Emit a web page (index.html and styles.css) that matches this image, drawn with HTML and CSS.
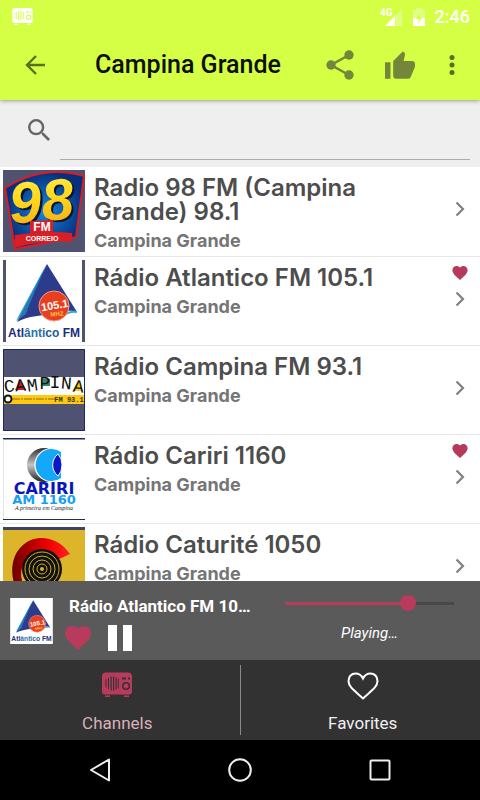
FILE: index.html
```html
<!DOCTYPE html>
<html lang="en">
<head>
<meta charset="utf-8">
<meta name="viewport" content="width=device-width, initial-scale=1">
<title>Campina Grande</title>
<link rel="stylesheet" href="styles.css">
</head>

<body>
<!--shared icons-->
<svg class="defs" aria-hidden="true">
	<symbol id="heart" viewBox="2 3 20 18.4"><path d="M12 21.35l-1.45-1.32C5.4 15.36 2 12.28 2 8.5 2 5.42 4.42 3 7.5 3c1.74 0 3.41.81 4.5 2.09C13.09 3.81 14.76 3 16.5 3 19.58 3 22 5.42 22 8.5c0 3.78-3.4 6.86-8.55 11.54z"/></symbol>
	<symbol id="chevron" viewBox="0 0 10 16"><path d="M1.5 1.5L8 8l-6.500 6.500" fill="none" stroke="currentColor" stroke-width="2.200"/></symbol>
	<symbol id="radio" viewBox="0 0 30 25">
		<path fill-rule="evenodd" d="M4 0h22a4 4 0 0 1 4 4v15a3 3 0 0 1-3 3H3a3 3 0 0 1-3-3V4a4 4 0 0 1 4-4zM20 5v2h4V5zM26 5v2h2V5zM24 9.500a4 4 0 1 0 0 8 4 4 0 0 0 0-8zM3.500 7v8h1V7zM6 5.500v11h1v-11zM8.500 4v14h1.200V4zM11 4v14h1.200V4zM13.500 5v12h1.200V5zM15.800 6v10h1V6z"/>
		<circle cx="24" cy="13.500" r="2.500"/>
		<path d="M3 23h5v1.500H3zM22 23h5v1.500h-5z"/>
	</symbol>
	<symbol id="atlantico" viewBox="0 0 76 82">
		<rect width="76" height="82" fill="#fff"/>
		<path d="M40 5L10 61l12-13z" fill="#25b4d8"/>
		<path d="M41 4l30 48c-8-3-13 0-22 2-12 1-27 2-38 8z" fill="#2d3b8d"/>
		<path d="M41 4L10 61l10-7c4-12 12-30 21-50z" fill="#2a9fcb" opacity=".6"/>
		<path d="M57 56c5-4 9-5 14-4" fill="none" stroke="#25b4d8" stroke-width="2"/>
		<circle cx="48" cy="46" r="15" fill="#e8401f" stroke="#f49b83"/>
		<text x="49" y="49" transform="rotate(-9 49 47)" class="t-freq">105.1</text>
		<text x="51" y="56" transform="rotate(-4 51 55)" class="t-mhz">MHZ</text>
		<text x="38" y="77" class="t-atl"><tspan fill="#1e2d7d">Atl</tspan><tspan fill="#2c73a5">ânti</tspan><tspan fill="#255a93">co</tspan><tspan fill="#1e2d7d"> FM</tspan></text>
	</symbol>
	<linearGradient id="gold" x2="0" y2="1"><stop stop-color="#fff14a"/><stop offset=".5" stop-color="#ffd51c"/><stop offset="1" stop-color="#f3a711"/></linearGradient>
	<radialGradient id="blue"><stop stop-color="#1289e0"/><stop offset="1" stop-color="#082f7c"/></radialGradient>
	<linearGradient id="steel" x2="0" y2="1"><stop stop-color="#333"/><stop offset=".5" stop-color="#c6c6c6"/><stop offset="1" stop-color="#222"/></linearGradient>
	<linearGradient id="red"><stop stop-color="#6d0000"/><stop offset=".6" stop-color="#e00"/><stop offset="1" stop-color="#f22"/></linearGradient>
</svg>

<!--header-->
<header class="header">
	<div class="status">
		<svg class="status-radio" width="21" height="17"><use href="#radio"/></svg>
		<svg width="23" height="19" viewBox="0 0 23 19">
			<path d="M22 2v17H5z" fill="#fff" opacity=".3"/>
			<path d="M15 9v10H5z" fill="#fff"/>
			<text x="0" y="9" class="t-4g">4G</text>
		</svg>
		<svg width="12" height="19" viewBox="0 0 12 19">
			<path d="M0 3h3V1h6v2h3v8H0z" fill="#fff" opacity=".35"/>
			<path d="M0 11h12v8H0z" fill="#fff"/>
			<path d="M7 5l-4 7h3l-1 5 4-7H6z" fill="#d4ff45"/>
		</svg>
		<span class="time">2:46</span>
	</div>
	<div class="appbar">
		<button class="icon-btn back" aria-label="Back">
			<svg width="20" height="20" viewBox="0 0 20 20"><path d="M11 1l-9 9 9 9M2 10h18" fill="none" stroke="currentColor" stroke-width="2.400"/></svg>
		</button>
		<h1 class="title">Campina Grande</h1>
		<button class="icon-btn share" aria-label="Share">
			<svg width="28" height="30" viewBox="0 0 28 30"><path d="M23 5L5 15l18 10" fill="none" stroke="currentColor" stroke-width="2.500"/><g fill="currentColor"><circle cx="23" cy="5" r="4.700"/><circle cx="5" cy="15" r="4.700"/><circle cx="23" cy="25" r="4.700"/></g></svg>
		</button>
		<button class="icon-btn like" aria-label="Like">
			<svg width="30" height="28" viewBox="1 1 22 20"><path fill="currentColor" d="M1 21h4V9H1v12zm22-11c0-1.100-.9-2-2-2h-6.310l.95-4.570.03-.32c0-.41-.17-.79-.44-1.060L14.170 1 7.590 7.590C7.220 7.950 7 8.450 7 9v10c0 1.100.9 2 2 2h9c.83 0 1.540-.5 1.840-1.220l3.020-7.050c.09-.23.14-.47.14-.73v-2z"/></svg>
		</button>
		<button class="icon-btn more" aria-label="More options">
			<svg width="6" height="20" viewBox="0 0 6 20" fill="currentColor"><circle cx="3" cy="2.500" r="2.500"/><circle cx="3" cy="10" r="2.500"/><circle cx="3" cy="17.500" r="2.500"/></svg>
		</button>
	</div>
</header>

<!--search-->
<div class="search">
	<label for="search">
		<svg width="22" height="22" viewBox="3 3 17.500 17.500"><path fill="#666" d="M15.500 14h-.79l-.28-.27A6.471 6.471 0 0 0 16 9.500 6.500 6.500 0 1 0 9.500 16c1.610 0 3.090-.59 4.230-1.570l.27.28v.79l5 4.990L20.490 19l-4.990-5zm-6 0C7.010 14 5 11.990 5 9.500S7.010 5 9.500 5 14 7.010 14 9.500 11.990 14 9.500 14z"/></svg>
	</label>
	<input id="search" type="text" aria-label="Search">
</div>

<!--stations-->
<ul class="list">
	<li><a class="row" href="#">
		<svg class="logo" viewBox="0 0 82 82">
			<rect width="82" height="82" fill="#4f5271"/>
			<path d="M2 18Q40-6 81 6l-8 61-61 12z" fill="url(#blue)" stroke="#db1d22" stroke-width="2"/>
			<text x="41" y="53" transform="rotate(-5 40 40)" class="t-98 shade">98</text>
			<text x="39" y="51" transform="rotate(-5 40 40)" class="t-98">98</text>
			<path d="M27 51l23-1v12l-23 1z" fill="#d91f25"/>
			<text x="39" y="61" class="t-fm">FM</text>
			<path d="M12 65q30-5 57-2v9q-30-2-58 6z" fill="#d91f25"/>
			<text x="39" y="71" class="t-cor">CORREIO</text>
		</svg>
		<div class="info">
			<h2>Radio 98 FM (Campina Grande) 98.1</h2>
			<p>Campina Grande</p>
		</div>
		<div class="side"><svg class="go"><use href="#chevron"/></svg></div>
	</a></li>
	<li><a class="row" href="#">
		<div class="logo framed"><svg width="76" height="82"><use href="#atlantico"/></svg></div>
		<div class="info">
			<h2>Rádio Atlantico FM 105.1</h2>
			<p>Campina Grande</p>
		</div>
		<div class="side"><svg class="fav"><use href="#heart"/></svg><svg class="go"><use href="#chevron"/></svg></div>
	</a></li>
	<li><a class="row" href="#">
		<svg class="logo" viewBox="0 0 82 82">
			<rect width="82" height="82" fill="#4f5271"/>
			<path d="M0 28h82v18H0z" fill="#fff"/>
			<path d="M0 46h82v9H0z" fill="#fdc913"/>
			<path d="M12 41l5-10 6 10z" fill="#d71920"/><path d="M38 30h9v7h-9z" fill="#2a8a72"/><path d="M70 42l6-11 4 11z" fill="#fdc913"/>
			<g class="t-camp"><text x="7" y="43" transform="rotate(-6 7 43)">C</text><text x="18" y="42" transform="rotate(-5 18 42)">A</text><text x="30" y="42" transform="rotate(-8 30 42)">M</text><text x="42" y="40">P</text><text x="52" y="39">I</text><text x="63" y="40" transform="rotate(5 63 40)">N</text><text x="75" y="43" transform="rotate(6 75 43)">A</text></g>
			<circle cx="5" cy="50" r="3.500" fill="#fff" stroke="#111" stroke-width="2"/>
			<path d="M9 50h43" stroke="#8b6d10" stroke-dasharray="8 1 2 1"/>
			<text x="66" y="53" class="t-931">FM 93.1</text>
			<path d="M.5.5h81v81H.5z" fill="none" stroke="#20285f"/>
		</svg>
		<div class="info">
			<h2>Rádio Campina FM 93.1</h2>
			<p>Campina Grande</p>
		</div>
		<div class="side"><svg class="go"><use href="#chevron"/></svg></div>
	</a></li>
	<li><a class="row" href="#">
		<svg class="logo" viewBox="0 0 82 82">
			<rect width="82" height="82" fill="#fff"/>
			<path d="M0 0h82v1.500H0zM0 81h82v1H0z" fill="#20285f"/>
			<path d="M0 1v80" stroke="#ccc"/>
			<circle cx="41" cy="27" r="17" fill="url(#steel)"/>
			<path d="M58 13a17 17 0 1 0 0 28z" fill="#fff"/>
			<path d="M58 14a16 16 0 1 0 0 26z" fill="#14a8fa"/>
			<path d="M55 16a14 14 0 0 0 0 22q4-4 4-11t-4-11z" fill="#0a16c8" stroke="#fff"/>
			<text x="41" y="56" class="t-car" fill="#0a16b8">CARIRI</text>
			<text x="41" y="66" class="t-am" fill="#14a0f5">AM 1160</text>
			<text x="41" y="72" class="t-slogan">A primeira em Campina</text>
		</svg>
		<div class="info">
			<h2>Rádio Cariri 1160</h2>
			<p>Campina Grande</p>
		</div>
		<div class="side"><svg class="fav"><use href="#heart"/></svg><svg class="go"><use href="#chevron"/></svg></div>
	</a></li>
	<li><a class="row" href="#">
		<svg class="logo" viewBox="0 0 82 82">
			<rect width="82" height="82" fill="#dcb52a"/>
			<path d="M0 0h82v3H0z" fill="#3d4269"/>
			<path d="M67 27C54 8 32 7 20 18 8 28 6 48 14 64h10C16 52 16 40 25 31c9-9 20-7 27 3z" fill="url(#red)"/>
			<circle cx="39" cy="42" r="20" fill="#111"/>
			<g fill="none" stroke="#cfae2c"><circle cx="39" cy="42" r="17"/><circle cx="39" cy="42" r="13"/><circle cx="39" cy="42" r="9"/><circle cx="39" cy="42" r="5"/></g>
			<circle cx="39" cy="42" r="2" fill="#dcb52a"/>
		</svg>
		<div class="info">
			<h2>Rádio Caturité 1050</h2>
			<p>Campina Grande</p>
		</div>
		<div class="side"><svg class="go"><use href="#chevron"/></svg></div>
	</a></li>
</ul>

<!--player-->
<section class="player">
	<div class="cover"><svg width="43" height="46"><use href="#atlantico"/></svg></div>
	<div class="track">
		<div class="track-name">Rádio Atlantico FM 10…</div>
		<div class="controls">
			<button aria-label="Favorite"><svg class="pink" width="26" height="24"><use href="#heart"/></svg></button>
			<button aria-label="Pause"><svg width="24" height="26" viewBox="0 0 24 26"><path d="M0 0h9v26H0zM15 0h9v26h-9z" fill="#fff"/></svg></button>
		</div>
	</div>
	<div class="volume">
		<input type="range" min="0" max="100" value="75" aria-label="Volume">
		<div class="state">Playing…</div>
	</div>
</section>

<!--tabs-->
<nav class="tabs">
	<a class="tab active" href="#">
		<svg width="30" height="26"><use href="#radio"/></svg>
		Channels
	</a>
	<span class="split"></span>
	<a class="tab" href="#">
		<svg width="32" height="28" viewBox="0 0 32 28"><path d="M16 26.500C8 19 1.500 15 1.500 9c0-4.500 3-7.500 7-7.500 3.500 0 6 2 7.500 5 1.500-3 4-5 7.500-5 4 0 7 3 7 7.500 0 6-6.500 10-14.500 17.500z" fill="none" stroke="#fff" stroke-width="2"/></svg>
		Favorites
	</a>
</nav>

<!--system bar-->
<footer class="sysbar">
	<button aria-label="System back"><svg width="24" height="24" viewBox="0 0 24 24"><path d="M21 1.500v21L3 12z"/></svg></button>
	<button aria-label="Home"><svg width="24" height="24" viewBox="0 0 24 24"><circle cx="12" cy="12" r="10.800"/></svg></button>
	<button aria-label="Recent apps"><svg width="24" height="24" viewBox="0 0 24 24"><rect x="2.500" y="2.500" width="19" height="19" rx="1"/></svg></button>
</footer>
</body>
</html>
```
FILE: styles.css
```css
* {
	box-sizing: border-box;
}
body {
	margin: 0;
	height: 100vh;
	display: flex;
	flex-direction: column;
	background: #efefef;
	font-family: Roboto, sans-serif;
}
h1, h2, p, ul {
	margin: 0;
	padding: 0;
}
ul {
	list-style: none;
}
svg {
	display: block;
}
button {
	display: flex;
	align-items: center;
	justify-content: center;
	padding: 0;
	border: 0;
	background: none;
	color: inherit;
}
a {
	color: inherit;
	text-decoration: none;
}
.defs {
	position: absolute;
	width: 0;
	height: 0;
}

/* header */
.header {
	flex: none;
	background: #d4ff45;
	box-shadow: 0 1px 4px rgba(0, 0, 0, .35);
}
.status {
	display: flex;
	align-items: center;
	gap: 10px;
	height: 30px;
	padding: 2px 10px 0 12px;
	color: #fff;
}
.status-radio {
	margin-right: auto;
	fill: #fff;
}
.status svg {
	overflow: visible;
}
.time {
	font-size: 18px;
	font-weight: 500;
}
.appbar {
	display: flex;
	align-items: center;
	height: 70px;
	padding-right: 12px;
	color: #5b6e1e;
}
.icon-btn {
	flex: none;
	height: 60px;
}
.back {
	width: 70px;
}
.share, .like {
	width: 60px;
	color: #74863a;
}
.more {
	width: 32px;
	margin-left: 6px;
}
.title {
	flex: 1;
	padding-left: 25px;
	font-size: 25px;
	font-weight: 500;
	line-height: 32px;
	color: #0c0f02;
	white-space: nowrap;
}

/* search */
.search {
	flex: none;
	display: flex;
	height: 67px;
	padding: 0 10px 7px 0;
}
.search label {
	width: 60px;
	padding: 19px 0 0 28px;
}
.search input {
	flex: 1;
	min-width: 0;
	border: 0;
	border-bottom: 1px solid #acacac;
	background: none;
	font: 18px Roboto, sans-serif;
	outline: none;
}

/* station list */
.list {
	flex: 1;
	min-height: 0;
	overflow: hidden;
	background: #fff;
}
.row {
	display: flex;
	min-height: 89px;
	padding: 3px 0 3px 3px;
	border-bottom: 1px solid #e8e8e8;
}
.logo {
	flex: none;
	width: 82px;
	height: 82px;
}
.framed {
	padding: 0 3px;
	background: #4f5271;
}
.info {
	flex: 1;
	padding: 6px 40px 0 9px;
	font-family: Inter, sans-serif;
}
.info h2 {
	font-size: 24px;
	font-weight: 600;
	line-height: 24px;
	color: #4d4d4d;
}
.info p {
	margin-top: 5px;
	font-size: 18px;
	font-weight: 700;
	line-height: 24px;
	color: #757575;
}
.side {
	flex: none;
	width: 40px;
	height: 82px;
	display: flex;
	flex-direction: column;
	align-items: center;
	justify-content: flex-end;
	gap: 11px;
	padding-bottom: 35px;
}
.fav {
	width: 16px;
	height: 14px;
	fill: #b53a5c;
}
.go {
	width: 10px;
	height: 16px;
	color: #808080;
}

/* player */
.player {
	flex: none;
	display: flex;
	height: 79px;
	padding-left: 10px;
	background: #5a5a5a;
	color: #fff;
}
.cover {
	padding-top: 17px;
}
.track {
	flex: 1;
	min-width: 0;
	padding: 15px 0 0 16px;
}
.track-name {
	font-size: 17px;
	font-weight: 700;
	line-height: 20px;
	white-space: nowrap;
}
.controls {
	display: flex;
	gap: 17px;
	margin: 9px 0 0 -4px;
}
.pink {
	fill: #b83b5e;
}
.volume {
	width: 195px;
	padding: 14px 26px 0 0;
}
.volume input {
	display: block;
	width: 100%;
	height: 16px;
	margin: 0;
	appearance: none;
	background: linear-gradient(90deg, #b83b5e 75%, #484848 75%) center / 100% 3px no-repeat;
}
.volume input::-webkit-slider-thumb {
	appearance: none;
	width: 16px;
	height: 16px;
	border-radius: 50%;
	background: #b83b5e;
}
.state {
	margin-top: 12px;
	font-size: 15px;
	font-style: italic;
	line-height: 20px;
	text-align: center;
}

/* tabs */
.tabs {
	flex: none;
	display: flex;
	height: 80px;
	background: #323232;
	color: #f0f0f0;
}
.tab {
	flex: 1;
	display: flex;
	flex-direction: column;
	align-items: center;
	justify-content: space-between;
	padding: 12px 0 7px;
	font-size: 17px;
	line-height: 20px;
}
.active {
	color: #d9b0bb;
	fill: #b83b5e;
}
.split {
	width: 1px;
	margin: 5px;
	background: #8a8a8a;
}

/* system bar */
.sysbar {
	flex: none;
	display: grid;
	grid-template-columns: repeat(3, 1fr);
	height: 60px;
	padding: 0 30px;
	background: #000;
}
.sysbar svg {
	fill: none;
	stroke: #eee;
	stroke-width: 2;
	stroke-linejoin: round;
}

/* text inside the logos */
svg text {
	font-family: "Liberation Sans", sans-serif;
	font-weight: 700;
	text-anchor: middle;
}
svg .t-4g {
	font: 700 10px Roboto, sans-serif;
	text-anchor: start;
	fill: #fff;
}
.t-freq {
	font-size: 11px;
	fill: #fff;
}
.t-mhz {
	font-size: 6px;
	fill: #ffc94a;
}
.t-atl {
	font-size: 12px;
}
.t-98 {
	font-size: 58px;
	font-style: italic;
	fill: url(#gold);
}
.shade {
	fill: #0a1436;
}
.t-fm {
	font-size: 12px;
	fill: #fff;
}
.t-cor {
	font-size: 7px;
	fill: #fff;
}
svg .t-camp text {
	font: 400 18px "Liberation Mono", monospace;
	fill: #111;
}
svg .t-931 {
	font: 700 7px "Liberation Mono", monospace;
	fill: #3b2f06;
}
svg .t-car {
	font: 700 16px "DejaVu Sans", sans-serif;
}
svg .t-am {
	font: 700 13px "DejaVu Sans", sans-serif;
}
svg .t-slogan {
	font: italic 6px "Liberation Serif", serif;
	fill: #222;
}
```
